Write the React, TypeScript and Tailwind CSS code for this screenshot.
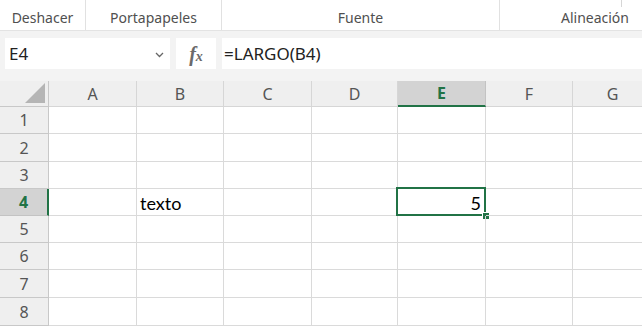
const cols = ['A', 'B', 'C', 'D', 'E', 'F', 'G'];
const rows = [1, 2, 3, 4, 5, 6, 7, 8];

const ui = { fontFamily: '"Noto Sans", "Open Sans", sans-serif' };
const cellFont = { fontFamily: 'Lato, "Noto Sans", sans-serif' };

function Ribbon() {
  return (
    <div className="flex h-[31px] bg-white text-[14px] text-[#505050] border-b border-[#e3e3e3]" style={ui}>
      <div className="w-[86px] border-r border-[#e1e1e1] flex items-end justify-center pb-[2px]">Deshacer</div>
      <div className="w-[136px] border-r border-[#e1e1e1] flex items-end justify-center pb-[2px]">Portapapeles</div>
      <div className="w-[278px] border-r border-[#e1e1e1] flex items-end justify-center pb-[2px]">Fuente</div>
      <div className="flex-1 relative flex items-end justify-end pr-[13px] pb-[2px]">
        Alineación
        <span className="absolute left-[121px] top-0 h-[7px] w-px bg-[#d6d6d6]" />
      </div>
    </div>
  );
}

function FormulaBar() {
  return (
    <div className="bg-[#f3f3f3] pt-[7px] pb-[12px] flex items-stretch" style={ui}>
      <div className="ml-[5px] w-[165px] h-[31px] bg-white flex items-center justify-between pl-[4px] pr-[6px]">
        <span className="text-[17px] text-[#222]">E4</span>
        <svg width="9" height="6" viewBox="0 0 9 6" className="mt-[2px]">
          <path d="M1 1l3.5 3.5L8 1" fill="none" stroke="#666" strokeWidth="1.3" />
        </svg>
      </div>
      <div className="ml-[6px] w-[40px] h-[31px] bg-white flex items-center justify-center">
        <span className="text-[20px] leading-none italic font-bold text-[#6a6a6a]" style={{ fontFamily: '"Liberation Serif", serif' }}>
          f<span className="text-[14px]">x</span>
        </span>
      </div>
      <div className="ml-[6px] flex-1 h-[31px] bg-white flex items-center pl-[2px]">
        <span className="text-[17px] text-[#222]">=LARGO(B4)</span>
      </div>
    </div>
  );
}

export default function App() {
  return (
    <div className="w-[642px] h-[326px] overflow-hidden bg-white">
      <Ribbon />
      <FormulaBar />
      <div
        className="grid grid-cols-[49px_88px_87px_88px_86px_88px_87px_80px] grid-rows-[26px_27px_28px_27px_27px_27px_27px_28px_28px]"
        style={ui}
      >
        <div className="bg-[#efefef] border-r border-b border-[#c8c8c8] flex items-end justify-end pr-[3px] pb-[3px]">
          <svg width="20" height="20" viewBox="0 0 20 20">
            <path d="M20 0V20H0Z" fill="#b5b5b5" />
          </svg>
        </div>
        {cols.map((c) =>
          c === 'E' ? (
            <div
              key={c}
              className="bg-[#d3d3d3] border-r border-[#c3c3c3] border-b-2 border-b-[#217346] flex items-center justify-center text-[16px] font-bold text-[#217346]"
            >
              {c}
            </div>
          ) : (
            <div
              key={c}
              className="bg-[#efefef] border-r border-b border-[#d6d6d6] flex items-center justify-center text-[16px] text-[#555]"
            >
              {c}
            </div>
          )
        )}
        {rows.map((r) => (
          <>
            {r === 4 ? (
              <div
                key={`h${r}`}
                className="bg-[#d3d3d3] border-r-2 border-r-[#217346] border-b border-[#c3c3c3] flex items-center justify-center text-[16px] font-bold text-[#217346]"
              >
                {r}
              </div>
            ) : (
              <div
                key={`h${r}`}
                className="bg-[#efefef] border-r border-b border-[#c8c8c8] flex items-center justify-center text-[16px] text-[#555]"
              >
                {r}
              </div>
            )}
            {cols.map((c) => {
              const active = r === 4 && c === 'E';
              return (
                <div
                  key={`${c}${r}`}
                  className="relative border-r border-b border-[#dadada] flex items-center text-[18px] text-black"
                  style={cellFont}
                >
                  {r === 4 && c === 'B' && <span className="pl-[3px] pt-[2px]">texto</span>}
                  {active && (
                    <>
                      <span className="ml-auto pr-[4px] pt-[2px]">5</span>
                      <span className="absolute left-[-2px] top-[-2px] right-[-1px] bottom-[-1px] border-2 border-[#217346]" />
                      <span className="absolute right-[-5px] bottom-[-5px] w-[8px] h-[8px] bg-[#217346] border border-white" />
                    </>
                  )}
                </div>
              );
            })}
          </>
        ))}
      </div>
    </div>
  );
}
